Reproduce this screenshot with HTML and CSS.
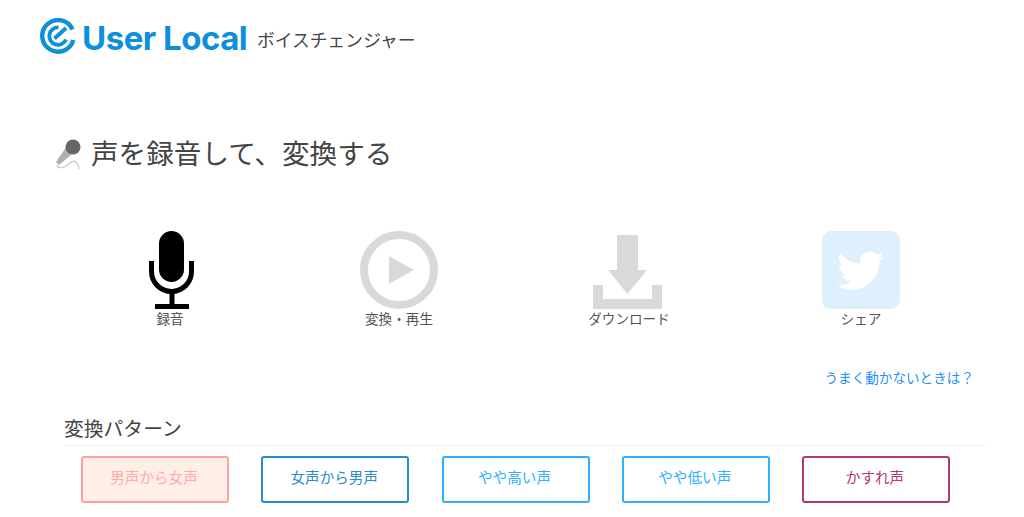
FILE: index.html
```html
<!DOCTYPE html>
<html lang="ja">
<head>
<meta charset="utf-8">
<title>ボイスチェンジャー</title>
<link rel="stylesheet" href="styles.css">
</head>
<body>
<header class="header">
  <svg class="logo-mark" viewBox="0 0 36 36" aria-hidden="true">
    <path d="M33.300 22A15.800 15.800 0 1 1 32.500 11.500" fill="none" stroke="#0d8fdc" stroke-width="4.400"/>
    <path d="M26 21.500A8.700 8.700 0 1 1 18.500 9.400" fill="none" stroke="#0d8fdc" stroke-width="3.800"/>
    <path d="M14.500 20.500L26 10" fill="none" stroke="#0d8fdc" stroke-width="3.800"/>
  </svg>
  <span class="logo-text">User Local</span>
  <span class="logo-sub">ボイスチェンジャー</span>
</header>
<main class="main">
  <h1 class="title">
    <svg class="title-icon" viewBox="0 0 28 34" aria-hidden="true">
      <path d="M2 30C3 34 8 33 11 31S18 24 21 27 24 32 24 34" fill="none" stroke="#ccc" stroke-width="1.200"/>
      <path d="M12.500 10L19.500 17 4 30 1 27z" fill="#b0b0b0"/>
      <circle cx="18" cy="12" r="7.500" fill="#666"/>
    </svg>
    <span>声を録音して、変換する</span>
  </h1>
  <section class="actions">
    <div class="action">
      <svg class="icon" viewBox="0 0 78 78" aria-hidden="true">
        <rect x="28" y="0" width="25" height="51" rx="12.500" fill="#000"/>
        <path d="M20.500 30v10.500a20 20 0 0 0 40 0V30" fill="none" stroke="#000" stroke-width="5"/>
        <path d="M41 60v15M24 75.500h34" fill="none" stroke="#000" stroke-width="5"/>
      </svg>
      <span class="action-label">録音</span>
    </div>
    <div class="action">
      <svg class="icon" viewBox="0 0 78 78" aria-hidden="true">
        <circle cx="39" cy="39" r="35" fill="none" stroke="#d9d9d9" stroke-width="8"/>
        <path d="M29 25v28l25-14z" fill="#d9d9d9"/>
      </svg>
      <span class="action-label">変換・再生</span>
    </div>
    <div class="action">
      <svg class="icon" viewBox="0 0 78 78" aria-hidden="true">
        <path d="M27 4h21v35h9L37.500 63 18 39h9zM3 54h10v14h49V54h10v24H3z" fill="#d9d9d9"/>
      </svg>
      <span class="action-label">ダウンロード</span>
    </div>
    <div class="action">
      <svg class="icon" viewBox="0 0 78 78" aria-hidden="true">
        <rect width="78" height="78" rx="9" fill="#def0fc"/>
        <path transform="translate(15 16.300) scale(1.960)" d="M23.953 4.570a10 10 0 01-2.825.775 4.958 4.958 0 002.163-2.723c-.951.555-2.005.959-3.127 1.184a4.920 4.920 0 00-8.384 4.482C7.690 8.095 4.067 6.130 1.640 3.162a4.822 4.822 0 00-.666 2.475c0 1.710.870 3.213 2.188 4.096a4.904 4.904 0 01-2.228-.616v.060a4.923 4.923 0 003.946 4.827 4.996 4.996 0 01-2.212.085 4.936 4.936 0 004.604 3.417 9.867 9.867 0 01-6.102 2.105c-.390 0-.779-.023-1.170-.067a13.995 13.995 0 007.557 2.209c9.053 0 13.998-7.496 13.998-13.985 0-.210 0-.420-.015-.630A9.935 9.935 0 0024 4.590z" fill="#fff"/>
      </svg>
      <span class="action-label">シェア</span>
    </div>
  </section>
  <p class="help"><a class="help-link" href="#">うまく動かないときは？</a></p>
  <h2 class="section-title">変換パターン</h2>
  <div class="patterns">
    <button class="pattern pattern-active">男声から女声</button>
    <button class="pattern pattern-blue">女声から男声</button>
    <button class="pattern pattern-sky">やや高い声</button>
    <button class="pattern pattern-sky">やや低い声</button>
    <button class="pattern pattern-plum">かすれ声</button>
  </div>
</main>
</body>
</html>
```

FILE: styles.css
```css
* { box-sizing: border-box; }
html, body { margin: 0; padding: 0; }
body {
  width: 1024px;
  height: 517px;
  overflow: hidden;
  background: #fff;
  color: #444;
  font-family: "Noto Sans CJK JP", "Noto Sans", sans-serif;
}
.header {
  display: flex;
  align-items: center;
  height: 72px;
  padding-left: 40px;
}
.logo-mark { width: 36px; height: 36px; flex: none; }
.logo-text {
  margin: 4px 0 0 6px;
  width: 175px;
  font-family: Inter, sans-serif;
  font-weight: 700;
  font-size: 33px;
  letter-spacing: -0.5px;
  line-height: 36px;
  color: #0d8fdc;
  white-space: nowrap;
}
.logo-sub { margin-top: 5px; font-size: 17.800px; line-height: 28px; color: #444; }
.main { padding: 0 39px 0 64px; }
.title {
  display: flex;
  align-items: center;
  margin: 58px 0 0 -9px;
  height: 44px;
  font-size: 27.600px;
  font-weight: 400;
  line-height: 44px;
  color: #444;
}
.title-icon { width: 28px; height: 34px; margin-right: 8px; flex: none; }
.actions {
  display: grid;
  grid-template-columns: 228px 230px 230px 234px;
  margin: 57px 0 0 -8px;
}
.action { display: flex; flex-direction: column; align-items: center; }
.icon { width: 78px; height: 78px; display: block; }
.action-label { margin-top: -1px; font-size: 13.600px; line-height: 20px; color: #555; }
.help { margin: 39px 11px 0 0; text-align: right; font-size: 13.600px; line-height: 20px; }
.help-link { color: #1e90ff; text-decoration: none; }
.section-title {
  margin: 26px 0 0;
  padding-bottom: 2px;
  border-bottom: 1px solid #eee;
  font-size: 19.800px;
  font-weight: 400;
  line-height: 30px;
  color: #444;
}
.patterns { display: flex; gap: 32.250px; margin: 10px 0 0 17px; }
.pattern {
  width: 148px;
  height: 47px;
  padding: 0 2px 6px 0;
  border: 2px solid;
  border-radius: 3px;
  background: #fff;
  font: inherit;
  font-size: 14.600px;
}
.pattern-active { border-color: #ff9ea3; background: #ffefe6; color: #ffabab; }
.pattern-blue { border-color: #2a8ccb; color: #2a8ccb; }
.pattern-sky { border-color: #2db1ff; color: #2db1ff; }
.pattern-plum { border-color: #b03a78; color: #b03a78; }
```
